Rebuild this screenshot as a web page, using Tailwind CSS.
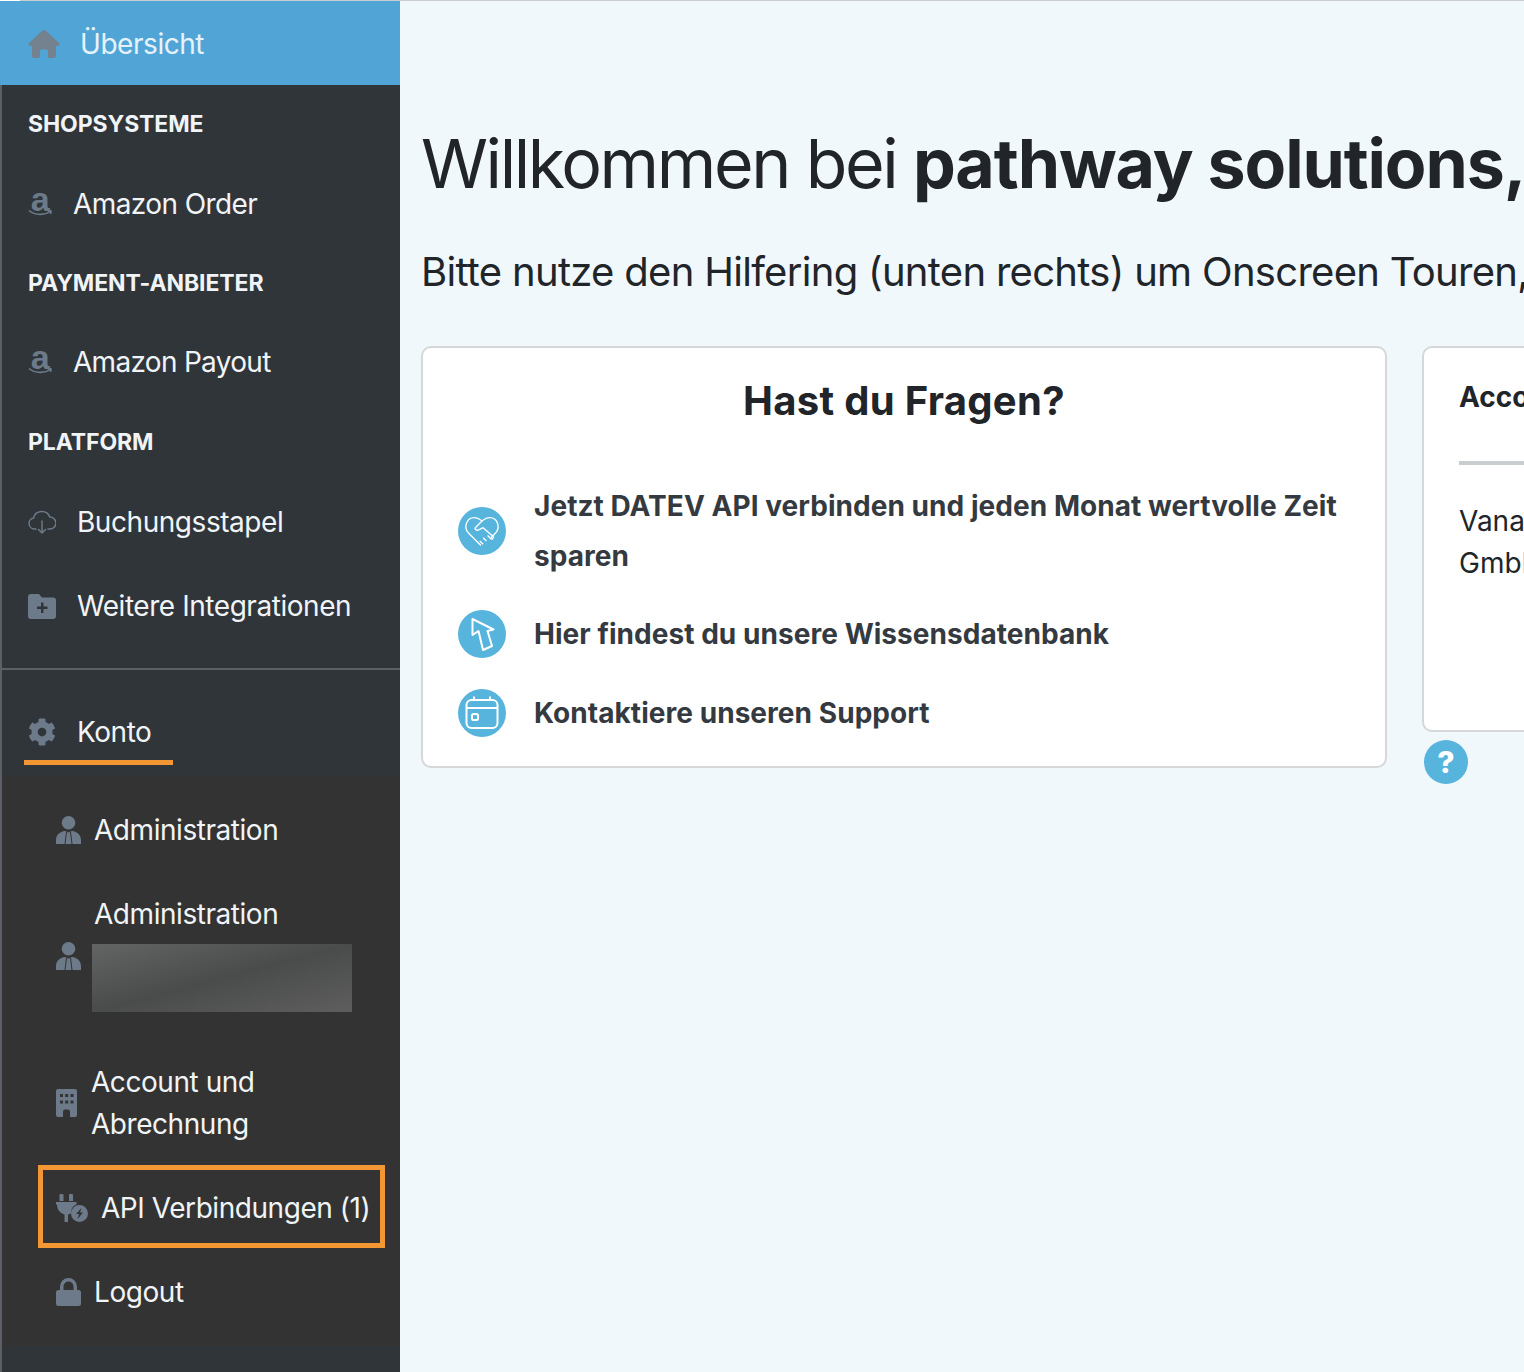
<!DOCTYPE html>
<html lang="en">
<head>
  <meta charset="UTF-8">
  <title>pathway solutions</title>
  <script src="https://cdn.jsdelivr.net/npm/@tailwindcss/browser@4"></script>
</head>
<body class="h-[1372px] overflow-hidden bg-[#f0f8fb] font-['Inter',sans-serif] text-[#212529]">

<!-- hairline at the very top -->
<div class="flex h-px"><div class="w-5 bg-white"></div><div class="flex-1 bg-[#c9cdd0]"></div></div>

<div class="flex h-[1371px]">
  <!-- sidebar -->
  <aside class="w-[400px] shrink-0 border-l-2 border-[#5c6064] bg-[#30353a] text-[28px] tracking-[-0.45px] text-[#f1f4f6]">
    <a class="flex h-[84px] -ml-0.5 items-center bg-[#50a5d6] pl-7 pt-0.5 text-[#e6f2f9]">
      <svg class="h-7 w-8 fill-[#74828f]" viewBox="0 0 32 28"><path d="M14.500.6a2.200 2.200 0 0 1 3 0L31 13c1.300 1.300.6 2.800-1 2.800h-2V26a2 2 0 0 1-2 2h-5a1 1 0 0 1-1-1v-6a1.500 1.500 0 0 0-1.500-1.500h-5A1.500 1.500 0 0 0 12 21v6a1 1 0 0 1-1 1H6a2 2 0 0 1-2-2V15.800H2c-1.600 0-2.300-1.500-1-2.800z"/></svg>
      <span class="ml-5">Übersicht</span>
    </a>

    <div class="flex h-[78px] items-center pl-[26px] text-[23px] font-bold tracking-[-0.1px]">SHOPSYSTEME</div>
    <a class="flex h-[81px] items-center pl-[26px]">
      <span class="relative h-8 w-6 text-center font-['Liberation_Sans',sans-serif] text-[34px] font-bold leading-[22px] text-[#6c7a89]">a
        <svg class="absolute left-0 top-[21px] h-2 w-6 fill-none stroke-[#6c7a89]" stroke-width="1.600" viewBox="0 0 24 8"><path d="M1 1.500c6 5 16 5 21 1M19.500 1.500l3.500 .5-.5 3"/></svg>
      </span>
      <span class="ml-[21px] tracking-[-0.6px]">Amazon Order</span>
    </a>
    <div class="flex h-[79px] items-center pl-[26px] text-[23px] font-bold tracking-[-0.1px]">PAYMENT-ANBIETER</div>
    <a class="flex h-[78px] items-center pl-[26px]">
      <span class="relative h-8 w-6 text-center font-['Liberation_Sans',sans-serif] text-[34px] font-bold leading-[22px] text-[#6c7a89]">a
        <svg class="absolute left-0 top-[21px] h-2 w-6 fill-none stroke-[#6c7a89]" stroke-width="1.600" viewBox="0 0 24 8"><path d="M1 1.500c6 5 16 5 21 1M19.500 1.500l3.500 .5-.5 3"/></svg>
      </span>
      <span class="ml-[21px] tracking-[-0.7px]">Amazon Payout</span>
    </a>
    <div class="flex h-[81px] items-center pl-[26px] pt-0.5 text-[23px] font-bold tracking-[-0.1px]">PLATFORM</div>
    <a class="flex h-[80px] items-center pl-[26px]">
      <svg class="h-7 w-7 fill-none stroke-[#6c7a89]" stroke-width="1.500" stroke-linecap="round" stroke-linejoin="round" viewBox="0 0 28 28"><path d="M8 21H6.500a5.500 5.500 0 0 1-1-10.900A8.500 8.500 0 0 1 21.800 9a6 6 0 0 1 .2 12h-2"/><path d="M14 13v12M10.500 21.500l3.500 3.500 3.500-3.500"/></svg>
      <span class="ml-[21px]">Buchungsstapel</span>
    </a>
    <a class="flex h-[88px] items-center pl-[26px]">
      <svg class="h-[25px] w-7 fill-[#6c7a89]" viewBox="0 0 28 25"><path fill-rule="evenodd" d="M3 0h8l3 3.500h11a3 3 0 0 1 3 3V22a3 3 0 0 1-3 3H3a3 3 0 0 1-3-3V3a3 3 0 0 1 3-3zm10 8.500v4H9v2.500h4v4h2.500v-4h4v-2.500h-4v-4z"/></svg>
      <span class="ml-[21px]">Weitere Integrationen</span>
    </a>

    <div class="mt-[18px] h-0.5 -ml-0.5 bg-[#5c6064]"></div>

    <div class="pt-[41px] pl-[22px]">
      <a class="inline-flex h-[54px] w-[149px] items-start border-b-[5px] border-[#f29733] pl-[4px]">
        <svg class="mt-[7px] h-7 w-7 fill-[#6c7a89]" viewBox="0 0 512 512"><path d="M487.4 315.7l-42.6-24.6c4.3-23.2 4.3-47 0-70.2l42.6-24.6c4.9-2.8 7.100-8.600 5.500-14-11.100-35.600-30-67.800-54.700-94.600-3.800-4.100-10-5.100-14.800-2.300L380.800 110c-17.900-15.400-38.500-27.300-60.800-35.100V25.800c0-5.600-3.900-10.500-9.400-11.700-36.700-8.200-74.300-7.800-109.200 0-5.500 1.200-9.400 6.100-9.400 11.700V75c-22.200 7.900-42.800 19.800-60.800 35.100L88.700 85.500c-4.900-2.800-11-1.900-14.800 2.300-24.700 26.700-43.600 58.900-54.700 94.600-1.700 5.400.6 11.200 5.500 14L67.300 221c-4.300 23.200-4.300 47 0 70.200l-42.600 24.600c-4.900 2.800-7.100 8.600-5.500 14 11.100 35.600 30 67.800 54.700 94.600 3.800 4.100 10 5.100 14.800 2.300l42.600-24.600c17.900 15.400 38.500 27.300 60.800 35.100v49.200c0 5.600 3.900 10.500 9.400 11.700 36.700 8.200 74.300 7.800 109.200 0 5.500-1.200 9.400-6.100 9.400-11.700v-49.200c22.200-7.900 42.800-19.800 60.800-35.100l42.600 24.600c4.900 2.800 11 1.900 14.800-2.300 24.700-26.700 43.600-58.900 54.700-94.600 1.500-5.500-.7-11.300-5.600-14.100zM256 336c-44.100 0-80-35.900-80-80s35.900-80 80-80 80 35.900 80 80-35.900 80-80 80z"/></svg>
        <span class="ml-[21px] leading-[42px]">Konto</span>
      </a>
    </div>

    <!-- submenu -->
    <div class="mt-[10px] bg-[#333333] pt-[13px] pb-3 pl-[54px]">
      <a class="flex h-[84px] items-center">
        <svg class="h-7 w-[25px] fill-[#6c7a89]" viewBox="0 0 25 28"><circle cx="12.500" cy="6.800" r="6.800"/><path d="M0 28v-4c0-5 4-8.500 9-9l3.500 1.500L16 15c5 .5 9 4 9 9v4z"/><path class="stroke-[#333333]" stroke-width="1" fill="none" d="M10.500 16l-1.500 12M14.500 16l1.500 12"/></svg>
        <span class="ml-[13px]">Administration</span>
      </a>
      <div class="flex h-[168px] items-center">
        <svg class="h-7 w-[25px] fill-[#6c7a89]" viewBox="0 0 25 28"><circle cx="12.500" cy="6.800" r="6.800"/><path d="M0 28v-4c0-5 4-8.500 9-9l3.500 1.500L16 15c5 .5 9 4 9 9v4z"/><path class="stroke-[#333333]" stroke-width="1" fill="none" d="M10.500 16l-1.500 12M14.500 16l1.500 12"/></svg>
        <div class="ml-[11px] self-start pt-[21px]">
          <div class="pl-0.5 leading-[42px]">Administration</div>
          <div class="mt-[9px] h-[68px] w-[260px] bg-linear-to-br from-[#636564] via-[#4a4b4b] to-[#5e5e5e]"></div>
        </div>
      </div>
      <a class="flex h-[125px] items-center">
        <svg class="h-7 w-[21px] fill-[#6c7a89]" viewBox="0 0 21 28"><path fill-rule="evenodd" d="M2 0h17a2 2 0 0 1 2 2v24a2 2 0 0 1-2 2h-5v-5.500a2 2 0 0 0-2-2H9a2 2 0 0 0-2 2V28H2a2 2 0 0 1-2-2V2a2 2 0 0 1 2-2zm2 5v3h3V5zm5.200 0v3h3V5zm5.300 0v3h3V5zM4 11.500v3h3v-3zm5.200 0v3h3v-3zm5.300 0v3h3v-3z"/></svg>
        <span class="ml-3.5 leading-[42px]">Account und<br>Abrechnung</span>
      </a>
      <a class="-ml-[18px] flex h-[83px] w-[347px] items-center border-[5px] border-[#f29733] pl-[13px] pt-0.5 whitespace-nowrap">
        <svg class="h-7 w-8 fill-[#6c7a89]" viewBox="0 0 32 28"><path fill-rule="evenodd" d="M4 0h2.500a1 1 0 0 1 1 1v6h-4V1a1 1 0 0 1 .5-1zM14 0h2a1 1 0 0 1 1 1v6h-4V1a1 1 0 0 1 1-1zM0 8h20.500v2.500a7 7 0 0 0-5 8.500 10 10 0 0 1-3.500 1.500V28H8.500v-7.500C3.500 19 1 15 1 10.500H0z"/><path fill-rule="evenodd" d="M23.500 11a8.500 8.500 0 1 1 0 17 8.500 8.500 0 0 1 0-17zm2 3l-5.500 6h3l-1.500 5 5.500-6.500h-3z"/></svg>
        <span class="ml-[13px]">API Verbindungen (1)</span>
      </a>
      <a class="mt-0.5 flex h-[84px] items-center">
        <svg class="h-7 w-[25px] fill-[#6c7a89]" viewBox="0 0 25 28"><path fill-rule="evenodd" d="M12.500 0A8.500 8.500 0 0 1 21 8.500V12h1.500a2.500 2.500 0 0 1 2.500 2.500v11a2.500 2.500 0 0 1-2.500 2.500h-20A2.500 2.500 0 0 1 0 25.500v-11A2.500 2.500 0 0 1 2.500 12H4V8.500A8.500 8.500 0 0 1 12.500 0zm0 3.500A5 5 0 0 0 7.500 8.500V12h10V8.500a5 5 0 0 0-5-5z"/></svg>
        <span class="ml-[13px]">Logout</span>
      </a>
    </div>
  </aside>

  <!-- main content -->
  <main class="min-w-0 flex-1 overflow-hidden pl-[21px]">
    <h1 class="mt-[123px] text-[68px] leading-[78px] whitespace-nowrap tracking-[-2.400px]">Willkommen bei <strong class="font-bold tracking-[-1.100px]">pathway solutions,</strong> schön dass du da bist</h1>
    <p class="mt-10 text-[40px] leading-[60px] whitespace-nowrap tracking-[-0.700px]">Bitte nutze den Hilfering (unten rechts) um Onscreen Touren, Hilfe und mehr zu finden</p>

    <div class="mt-[44px] flex items-start gap-[35px]">
      <section class="h-[422px] w-[966px] shrink-0 rounded-[10px] border-2 border-[#d5d7d8] bg-white px-[35px]">
        <h2 class="mt-[29px] text-center text-[40px] leading-[48px] font-bold tracking-[0.300px]">Hast du Fragen?</h2>
        <ul class="mt-[56px] text-[28px] leading-[50px] font-bold tracking-[0.050px] text-[#343a40]">
          <li class="flex items-center">
            <span class="flex h-12 w-12 shrink-0 items-center justify-center rounded-full bg-[#56b4dd]">
              <svg class="h-10 w-10 fill-none stroke-white" stroke-width="1.200" stroke-linejoin="round" viewBox="0 0 36 36"><path d="M17 31L6 20C1 15 4 6 11 6c3 0 5 1.500 7 3 2-1.500 4-3 7-3 7 0 10 9 5 14l-4 4"/><path d="M18 9l-6 6c-1 1 1 3 3 2l4-2 9 8c1 1-1 3-2 2M22 27l-3-3M26 25l-3-3M19 30l-3-3"/></svg>
            </span>
            <span class="ml-7 w-[820px]">Jetzt DATEV API verbinden und jeden Monat wertvolle Zeit sparen</span>
          </li>
          <li class="mt-7 flex items-center">
            <span class="flex h-12 w-12 shrink-0 items-center justify-center rounded-full bg-[#56b4dd]">
              <svg class="h-12 w-12 fill-none stroke-white" stroke-width="2" stroke-linejoin="round" viewBox="0 0 48 48"><path d="M14.500 9V25l6-4 4.500 19 9-4-4.500-15 6-1.500z"/></svg>
            </span>
            <span class="ml-7">Hier findest du unsere Wissensdatenbank</span>
          </li>
          <li class="mt-[29px] flex items-center">
            <span class="flex h-12 w-12 shrink-0 items-center justify-center rounded-full bg-[#56b4dd]">
              <svg class="h-10 w-10 fill-none stroke-white" stroke-width="2" viewBox="0 0 40 40"><rect x="4.500" y="7" width="31" height="28" rx="5"/><path d="M4.500 15h31M12 3.500v4M28 3.500v4"/><rect x="10" y="21" width="6" height="6" rx="1.500"/></svg>
            </span>
            <span class="ml-7">Kontaktiere unseren Support</span>
          </li>
        </ul>
      </section>

      <div class="w-[600px] shrink-0">
        <section class="h-[386px] rounded-[10px] border-2 border-[#d5d7d8] bg-white pl-[35px]">
          <h3 class="mt-[28px] text-[28px] leading-[42px] font-bold whitespace-nowrap">Accountdaten</h3>
          <div class="mt-[43px] h-1 bg-[#c9cdd0]"></div>
          <p class="mt-[35px] text-[28px] leading-[42px]">Vanatrade<br>GmbH</p>
        </section>
        <div class="mt-2 ml-0.5 flex h-11 w-11 items-center justify-center rounded-full bg-[#56b4dd] text-[30px] font-extrabold text-white">?</div>
      </div>
    </div>
  </main>
</div>

</body>
</html>
